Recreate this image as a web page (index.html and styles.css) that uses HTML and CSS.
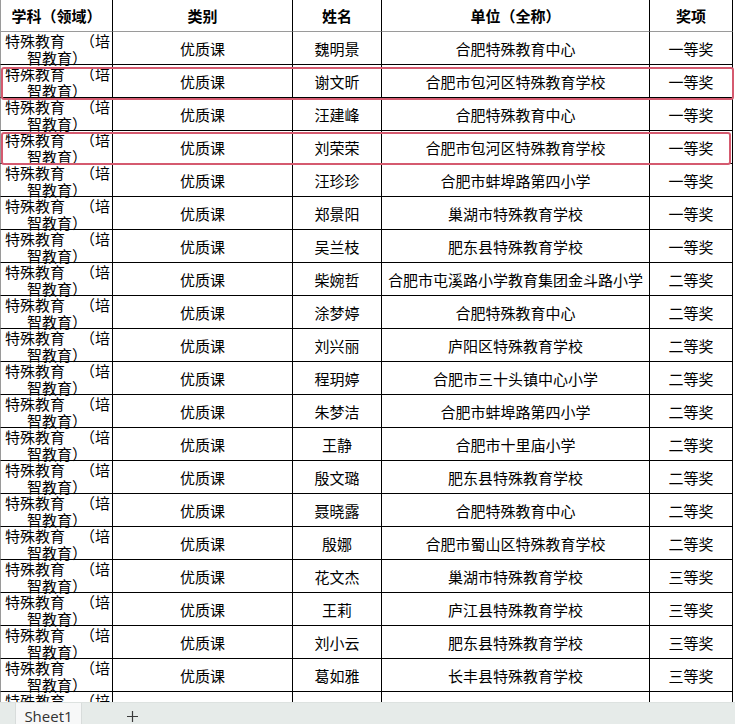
FILE: index.html
```html
<!DOCTYPE html>
<html lang="zh-CN">
<head>
<meta charset="utf-8">
<title>Sheet1</title>
<link rel="stylesheet" href="styles.css">
</head>
<body>
<div class="page">
  <div class="sheet">
    <div class="grid">
      <div class="c h c1">学科（领域）</div>
      <div class="c h">类别</div>
      <div class="c h">姓名</div>
      <div class="c h">单位（全称）</div>
      <div class="c h">奖项</div>

      <div class="c c1"><div class="l1"><span>特殊教育</span><span>（培</span></div><div class="l2">智教育）</div></div>
      <div class="c">优质课</div><div class="c">魏明景</div><div class="c">合肥特殊教育中心</div><div class="c">一等奖</div>

      <div class="c c1"><div class="l1"><span>特殊教育</span><span>（培</span></div><div class="l2">智教育）</div></div>
      <div class="c">优质课</div><div class="c">谢文昕</div><div class="c">合肥市包河区特殊教育学校</div><div class="c">一等奖</div>

      <div class="c c1"><div class="l1"><span>特殊教育</span><span>（培</span></div><div class="l2">智教育）</div></div>
      <div class="c">优质课</div><div class="c">汪建峰</div><div class="c">合肥特殊教育中心</div><div class="c">一等奖</div>

      <div class="c c1"><div class="l1"><span>特殊教育</span><span>（培</span></div><div class="l2">智教育）</div></div>
      <div class="c">优质课</div><div class="c">刘荣荣</div><div class="c">合肥市包河区特殊教育学校</div><div class="c">一等奖</div>

      <div class="c c1"><div class="l1"><span>特殊教育</span><span>（培</span></div><div class="l2">智教育）</div></div>
      <div class="c">优质课</div><div class="c">汪珍珍</div><div class="c">合肥市蚌埠路第四小学</div><div class="c">一等奖</div>

      <div class="c c1"><div class="l1"><span>特殊教育</span><span>（培</span></div><div class="l2">智教育）</div></div>
      <div class="c">优质课</div><div class="c">郑景阳</div><div class="c">巢湖市特殊教育学校</div><div class="c">一等奖</div>

      <div class="c c1"><div class="l1"><span>特殊教育</span><span>（培</span></div><div class="l2">智教育）</div></div>
      <div class="c">优质课</div><div class="c">吴兰枝</div><div class="c">肥东县特殊教育学校</div><div class="c">一等奖</div>

      <div class="c c1"><div class="l1"><span>特殊教育</span><span>（培</span></div><div class="l2">智教育）</div></div>
      <div class="c">优质课</div><div class="c">柴婉哲</div><div class="c">合肥市屯溪路小学教育集团金斗路小学</div><div class="c">二等奖</div>

      <div class="c c1"><div class="l1"><span>特殊教育</span><span>（培</span></div><div class="l2">智教育）</div></div>
      <div class="c">优质课</div><div class="c">涂梦婷</div><div class="c">合肥特殊教育中心</div><div class="c">二等奖</div>

      <div class="c c1"><div class="l1"><span>特殊教育</span><span>（培</span></div><div class="l2">智教育）</div></div>
      <div class="c">优质课</div><div class="c">刘兴丽</div><div class="c">庐阳区特殊教育学校</div><div class="c">二等奖</div>

      <div class="c c1"><div class="l1"><span>特殊教育</span><span>（培</span></div><div class="l2">智教育）</div></div>
      <div class="c">优质课</div><div class="c">程玥婷</div><div class="c">合肥市三十头镇中心小学</div><div class="c">二等奖</div>

      <div class="c c1"><div class="l1"><span>特殊教育</span><span>（培</span></div><div class="l2">智教育）</div></div>
      <div class="c">优质课</div><div class="c">朱梦洁</div><div class="c">合肥市蚌埠路第四小学</div><div class="c">二等奖</div>

      <div class="c c1"><div class="l1"><span>特殊教育</span><span>（培</span></div><div class="l2">智教育）</div></div>
      <div class="c">优质课</div><div class="c">王静</div><div class="c">合肥市十里庙小学</div><div class="c">二等奖</div>

      <div class="c c1"><div class="l1"><span>特殊教育</span><span>（培</span></div><div class="l2">智教育）</div></div>
      <div class="c">优质课</div><div class="c">殷文璐</div><div class="c">肥东县特殊教育学校</div><div class="c">二等奖</div>

      <div class="c c1"><div class="l1"><span>特殊教育</span><span>（培</span></div><div class="l2">智教育）</div></div>
      <div class="c">优质课</div><div class="c">聂晓露</div><div class="c">合肥特殊教育中心</div><div class="c">二等奖</div>

      <div class="c c1"><div class="l1"><span>特殊教育</span><span>（培</span></div><div class="l2">智教育）</div></div>
      <div class="c">优质课</div><div class="c">殷娜</div><div class="c">合肥市蜀山区特殊教育学校</div><div class="c">二等奖</div>

      <div class="c c1"><div class="l1"><span>特殊教育</span><span>（培</span></div><div class="l2">智教育）</div></div>
      <div class="c">优质课</div><div class="c">花文杰</div><div class="c">巢湖市特殊教育学校</div><div class="c">三等奖</div>

      <div class="c c1"><div class="l1"><span>特殊教育</span><span>（培</span></div><div class="l2">智教育）</div></div>
      <div class="c">优质课</div><div class="c">王莉</div><div class="c">庐江县特殊教育学校</div><div class="c">三等奖</div>

      <div class="c c1"><div class="l1"><span>特殊教育</span><span>（培</span></div><div class="l2">智教育）</div></div>
      <div class="c">优质课</div><div class="c">刘小云</div><div class="c">肥东县特殊教育学校</div><div class="c">三等奖</div>

      <div class="c c1"><div class="l1"><span>特殊教育</span><span>（培</span></div><div class="l2">智教育）</div></div>
      <div class="c">优质课</div><div class="c">葛如雅</div><div class="c">长丰县特殊教育学校</div><div class="c">三等奖</div>

      <div class="c c1"><div class="l1"><span>特殊教育</span><span>（培</span></div><div class="l2">智教育）</div></div>
      <div class="c">优质课</div><div class="c">杨玉梅</div><div class="c">肥西县特殊教育学校</div><div class="c">三等奖</div>
    </div>
    <div class="mark mark-a"></div>
    <div class="mark mark-b"></div>
  </div>
  <div class="tabbar">
    <div class="tab">Sheet1</div>
    <div class="add">
      <svg width="13" height="13" viewBox="0 0 13 13"><path d="M6.5 1v11M1 6.5h11" stroke="#3a3a3a" stroke-width="1.2" fill="none"/></svg>
    </div>
  </div>
</div>
</body>
</html>
```

FILE: styles.css
```css
* { box-sizing: border-box; }
html, body { margin: 0; padding: 0; background: #fff; }
body {
  font-family: "Noto Sans CJK SC", "Noto Sans", sans-serif;
  color: #000;
  font-size: 15px;
}
.page {
  width: 735px;
  height: 724px;
  display: flex;
  flex-direction: column;
  overflow: hidden;
}
.sheet {
  position: relative;
  flex: 0 0 702px;
  overflow: hidden;
}
.grid {
  display: grid;
  grid-template-columns: 113px 180px 89px 268px 83px;
  grid-auto-rows: 33px;
  grid-template-rows: 32px;
  width: 733px;
}
.c {
  border-right: 1px solid #000;
  border-bottom: 1px solid #000;
  display: flex;
  align-items: center;
  justify-content: center;
  line-height: 16px;
  white-space: nowrap;
  overflow: visible;
  padding-top: 1px;
}
.h {
  font-weight: bold;
  border-bottom-color: #9a9a9a;
  padding-top: 0;
}
.c1 { border-left: 1px solid #9a9a9a; }
.c1:not(.h) {
  flex-direction: column;
  align-items: stretch;
  justify-content: flex-start;
  padding: 1px 2px 0 4px;
}
.l1 {
  display: flex;
  justify-content: space-between;
  height: 16px;
}
.l2 {
  height: 16px;
  margin-top: 1px;
  padding-left: 22px;
}
.mark {
  position: absolute;
  left: 1px;
  border: 2px solid #d55a6f;
  border-radius: 3px;
  pointer-events: none;
}
.mark-a { top: 67px; width: 733px; height: 33px; }
.mark-b { top: 132px; width: 730px; height: 33px; }
.tabbar {
  flex: 0 0 22px;
  background: #e6ebe9;
  display: flex;
  align-items: stretch;
  border-top: 1px solid #dde2e0;
}
.tab {
  margin-left: 15px;
  width: 67px;
  background: #f7f8f8;
  border-left: 1px solid #d8dcdb;
  border-right: 1px solid #d8dcdb;
  font-family: "Open Sans", "Noto Sans", sans-serif;
  font-size: 15px;
  color: #333;
  display: flex;
  align-items: center;
  justify-content: center;
  padding-top: 3px;
}
.add {
  margin-left: 44px;
  display: flex;
  align-items: center;
  padding-top: 4px;
}
```
